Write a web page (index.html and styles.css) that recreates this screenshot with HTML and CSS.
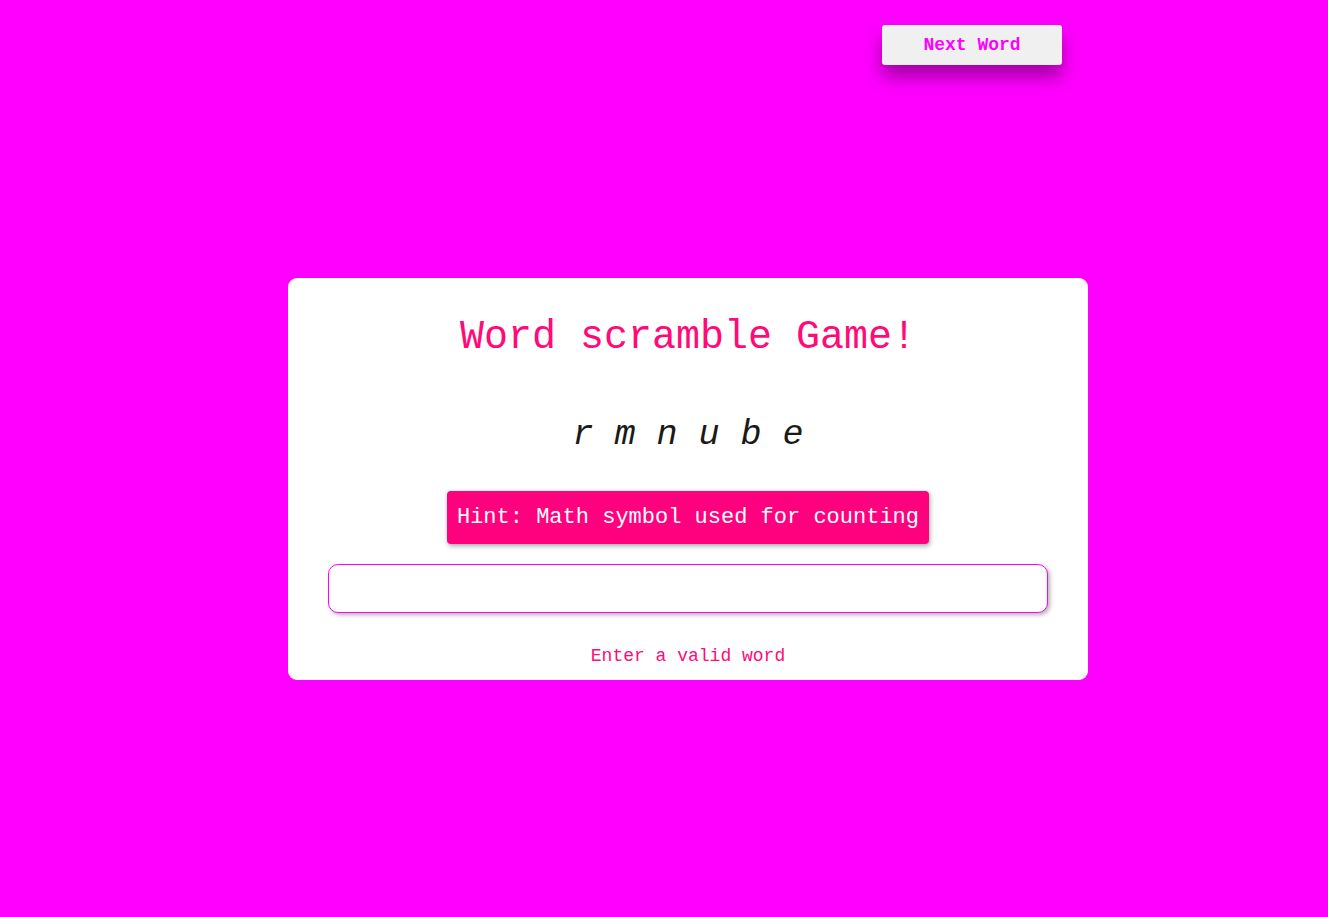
FILE: index.html
```html
<!DOCTYPE html>
<html lang="en">
<head>
<meta charset="utf-8">
<title>Word scramble Game!</title>
<link rel="stylesheet" href="styles.css">
</head>
<body>
  <div class="top-bar">
    <button class="next-btn" type="button">Next Word</button>
  </div>
  <main class="card">
    <h1 class="title">Word scramble Game!</h1>
    <p class="scrambled">r m n u b e</p>
    <div class="hint">Hint: Math symbol used for counting</div>
    <input class="guess" type="text" aria-label="Your guess">
    <p class="message">Enter a valid word</p>
  </main>
</body>
</html>
```
FILE: styles.css
```css
html, body {
  margin: 0;
  padding: 0;
}
body {
  background: #ff00ff;
  min-height: 917px;
  font-family: "Liberation Mono", "Courier New", monospace;
}
.top-bar {
  display: flex;
  justify-content: flex-end;
  padding: 25px 266px 0 0;
}
.next-btn {
  width: 180px;
  height: 40px;
  background: #f0f0f0;
  border: none;
  border-radius: 3px;
  color: #ff00ff;
  font-family: "Liberation Mono", "Courier New", monospace;
  font-weight: bold;
  font-size: 18px;
  box-shadow: 0 12px 18px rgba(90, 0, 90, 0.55);
  cursor: pointer;
}
.card {
  width: 800px;
  box-sizing: border-box;
  margin: 213px 0 0 288px;
  background: #ffffff;
  border-radius: 9px;
  padding: 37px 40px 14px;
  display: flex;
  flex-direction: column;
  align-items: center;
}
.title {
  margin: 0;
  font-size: 40px;
  font-weight: normal;
  color: #ff0a78;
  line-height: 45px;
}
.scrambled {
  margin: 55px 0 0;
  font-size: 35px;
  font-style: italic;
  color: #1a1a1a;
  line-height: 40px;
}
.hint {
  margin-top: 36px;
  background: #ff007f;
  color: #ffffff;
  font-size: 22px;
  line-height: 26px;
  padding: 14px 10px 13px;
  border-radius: 4px;
  box-shadow: 1px 2px 5px rgba(0, 0, 0, 0.35);
}
.guess {
  margin-top: 20px;
  width: 100%;
  height: 49px;
  box-sizing: border-box;
  border: 1px solid #ff00ff;
  border-radius: 10px;
  box-shadow: 2px 2px 4px rgba(0, 0, 0, 0.3);
  outline: none;
  font-family: "Liberation Mono", "Courier New", monospace;
  font-size: 18px;
  padding: 0 12px;
}
.message {
  margin: 33px 0 0;
  font-size: 18px;
  line-height: 20px;
  color: #ff0a78;
}
```
